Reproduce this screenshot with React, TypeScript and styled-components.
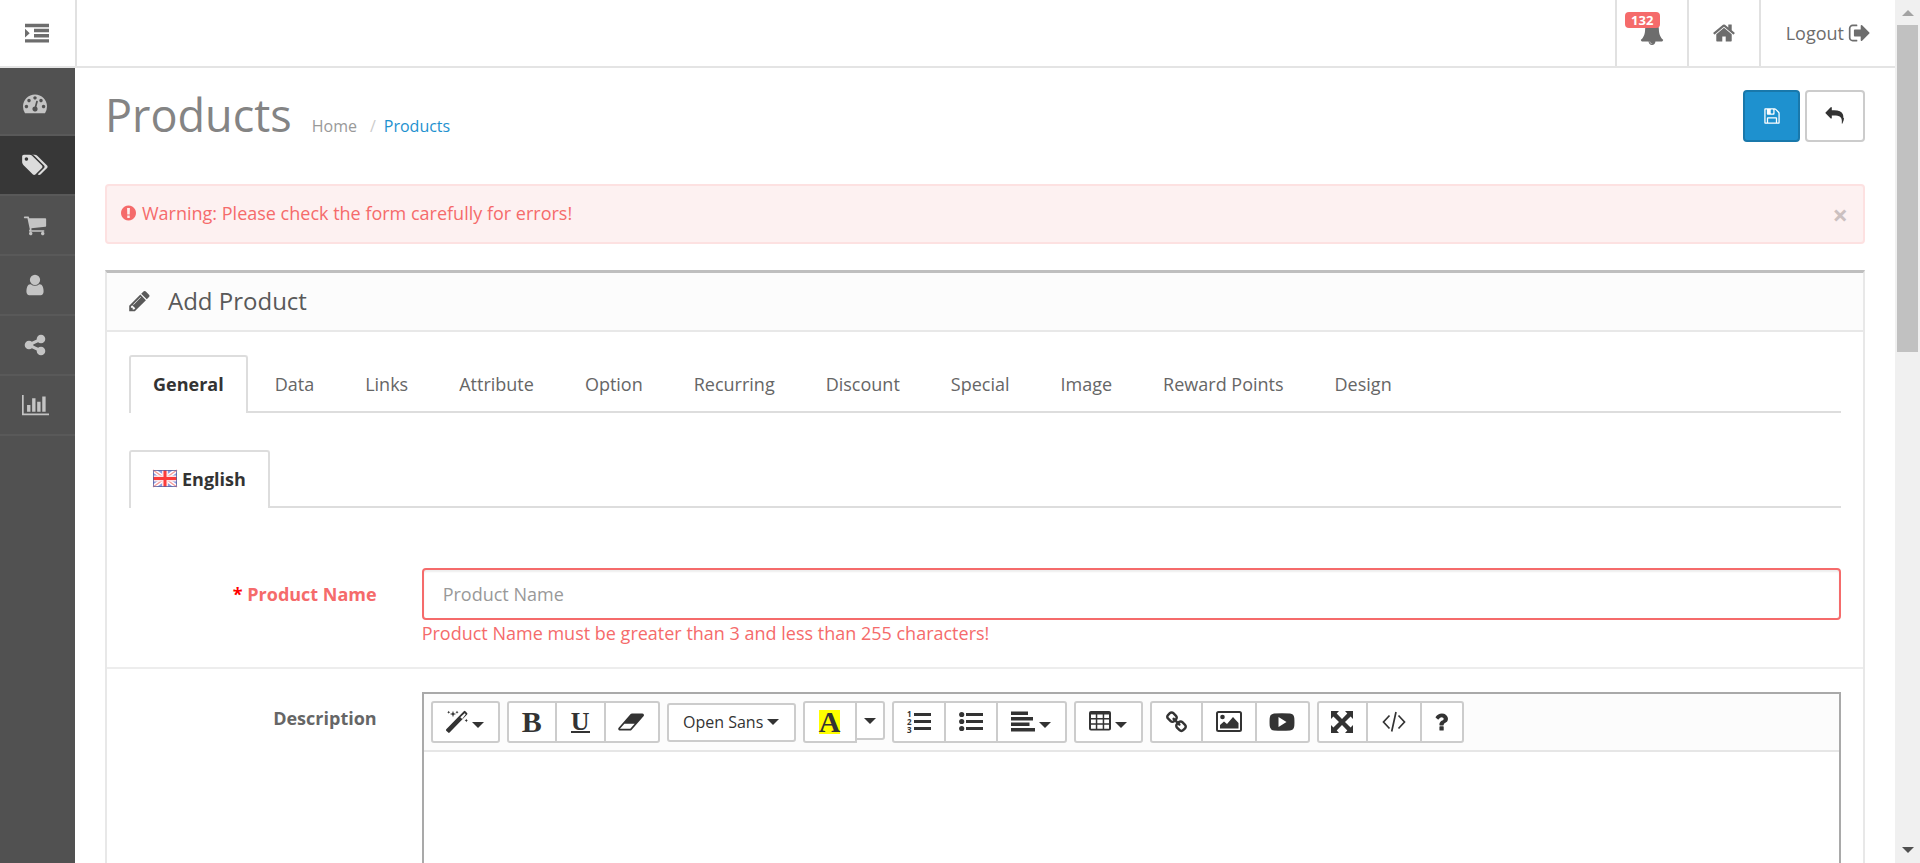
import React from 'react';
import styled, { createGlobalStyle, css } from 'styled-components';

const GlobalStyle = createGlobalStyle`
  *, *::before, *::after { box-sizing: border-box; }
  body {
    margin: 0;
    background: #fff;
    color: #666;
    font: 18px/26px "Open Sans", "Liberation Sans", sans-serif;
  }
  button, input, textarea { font: inherit; }
  a { text-decoration: none; }
  ul { list-style: none; margin: 0; padding: 0; }
  svg { display: block; flex: none; overflow: visible; }
`;

/* ---------- icons ---------- */

const PATHS = {
  indent: 'M0 128h1792v256H0zM672 512h1120v256H672zM672 896h1120v256H672zM0 1280h1792v256H0zM0 512l352 320L0 1152z',
  dashboard:
    'M384 1152q0-53-37.500-90.500t-90.500-37.500-90.500 37.500-37.500 90.500 37.500 90.500 90.500 37.500 90.500-37.500 37.500-90.500zm192-448q0-53-37.500-90.500t-90.500-37.500-90.500 37.500-37.500 90.500 37.500 90.500 90.500 37.500 90.500-37.500 37.500-90.500zm428 481l101-382q6-26-7.500-48.500t-38.500-29.500-48 6.500-30 39.500l-101 382q-60 5-107 43.500t-63 98.500q-20 77 20 146t117 89 146-20 89-117q16-60-6-117t-72-91zm660-33q0-53-37.500-90.500t-90.500-37.500-90.500 37.500-37.500 90.500 37.500 90.500 90.500 37.500 90.500-37.500 37.500-90.500zm-640-640q0-53-37.500-90.500t-90.500-37.500-90.500 37.500-37.500 90.500 37.500 90.500 90.500 37.500 90.500-37.500 37.500-90.500zm448 192q0-53-37.500-90.500t-90.500-37.500-90.500 37.500-37.500 90.500 37.500 90.500 90.500 37.500 90.500-37.500 37.500-90.500zm320 448q0 261-141 483-19 29-54 29h-1402q-35 0-54-29-141-221-141-483 0-182 71-348t191-286 286-191 348-71 348 71 286 191 191 286 71 348z',
  tags:
    'M576 448q0-53-37.500-90.500t-90.500-37.500-90.500 37.500-37.500 90.500 37.500 90.500 90.500 37.500 90.500-37.500 37.500-90.500zm1067 576q0 53-37 90l-491 492q-39 37-91 37-53 0-90-37l-715-716q-38-37-64.500-101t-26.500-117v-416q0-52 38-90t90-38h416q53 0 117 26.500t102 64.500l715 714q37 39 37 91zm384 0q0 53-37 90l-491 492q-39 37-91 37-36 0-59-14t-53-45l470-470q37-37 37-90 0-52-37-91l-715-714q-38-38-102-64.500t-117-26.500h224q53 0 117 26.500t102 64.500l715 714q37 39 37 91z',
  cart:
    'M704 1536q0 52-38 90t-90 38-90-38-38-90 38-90 90-38 90 38 38 90zm896 0q0 52-38 90t-90 38-90-38-38-90 38-90 90-38 90 38 38 90zm128-1088v512q0 24-16.500 42.500t-40.500 21.500l-1044 122q13 60 13 70 0 16-24 64h920q26 0 45 19t19 45-19 45-45 19h-1024q-26 0-45-19t-19-45q0-11 8-31.500t16-36 21.500-40 15.500-29.500l-177-823h-204q-26 0-45-19t-19-45 19-45 45-19h256q16 0 28.500 6.500t19.500 15.500 13 24.500 8 26 5.500 29.500 4.500 26h1201q26 0 45 19t19 45z',
  user:
    'M1536 1399q0 109-62.500 187t-150.500 78h-854q-88 0-150.500-78t-62.500-187q0-85 8.500-160.500t31.500-152 58.500-131 94-89 134.500-34.500q131 128 313 128t313-128q76 0 134.500 34.500t94 89 58.500 131 31.500 152 8.500 160.500zm-256-887q0 159-112.500 271.500t-271.500 112.500-271.500-112.500-112.500-271.500 112.500-271.500 271.500-112.500 271.500 112.500 112.500 271.500z',
  share:
    'M1344 1024q133 0 226.500 93.500t93.500 226.500-93.500 226.500-226.500 93.500-226.500-93.500-93.500-226.500q0-12 2-34l-360-180q-92 86-218 86-133 0-226.500-93.500t-93.500-226.500 93.500-226.500 226.500-93.500q126 0 218 86l360-180q-2-22-2-34 0-133 93.500-226.500t226.500-93.500 226.500 93.500 93.500 226.500-93.500 226.500-226.500 93.500q-126 0-218-86l-360 180q2 22 2 34t-2 34l360 180q92-86 218-86z',
  chart:
    'M640 896v512h-256v-512h256zm384-512v1024h-256v-1024h256zm1024 1152v128h-2048v-1536h128v1408h1920zm-640-896v768h-256v-768h256zm384-384v1152h-256v-1152h256z',
  bell:
    'M912 1696q0-16-16-16-59 0-101.500-42.500t-42.500-101.500q0-16-16-16t-16 16q0 73 51.500 124.500t124.500 51.500q16 0 16-16zm816-288q0 52-38 90t-90 38h-448q0 106-75 181t-181 75-181-75-75-181h-448q-52 0-90-38t-38-90q50-42 91-88t85-119.500 74.500-158.500 50-206 19.500-260q0-152 117-282.500t307-158.500q-8-19-8-39 0-40 28-68t68-28 68 28 28 68q0 20-8 39 190 28 307 158.500t117 282.500q0 139 19.500 260t50 206 74.500 158.500 85 119.500 91 88z',
  home:
    'M1472 992v480q0 26-19 45t-45 19h-384v-384h-256v384h-384q-26 0-45-19t-19-45v-480q0-1 .5-3t.5-3l575-474 575 474q1 2 1 6zm223-69l-62 74q-8 9-21 11h-3q-13 0-21-7l-692-577-692 577q-12 8-24 7-13-2-21-11l-62-74q-8-10-7-23.500t11-21.500l719-599q32-26 76-26t76 26l244 204v-195q0-14 9-23t23-9h192q14 0 23 9t9 23v408l219 182q10 8 11 21.500t-7 23.500z',
  signOut:
    'M704 1440q0 4 1 20t.5 26.500-3 23.500-10 19.500-20.500 6.500h-320q-119 0-203.500-84.500t-84.500-203.500v-704q0-119 84.500-203.500t203.500-84.500h320q13 0 22.500 9.500t9.500 22.500q0 4 1 20t.5 26.500-3 23.500-10 19.500-20.500 6.500h-320q-66 0-113 47t-47 113v704q0 66 47 113t113 47h312l11.500 1 11.500 3 8 5.500 7 9 2 13.500zm928-544q0 26-19 45l-544 544q-19 19-45 19t-45-19-19-45v-288h-448q-26 0-45-19t-19-45v-384q0-26 19-45t45-19h448v-288q0-26 19-45t45-19 45 19l544 544q19 19 19 45z',
  save:
    'M512 1536h768v-384h-768v384zm896 0h128v-896q0-14-10-38.500t-20-34.500l-281-281q-10-10-34-20t-39-10v416q0 40-28 68t-68 28h-576q-40 0-68-28t-28-68v-416h-128v1280h128v-416q0-40 28-68t68-28h832q40 0 68 28t28 68v416zm-384-928v-320q0-13-9.500-22.500t-22.500-9.500h-192q-13 0-22.500 9.500t-9.500 22.500v320q0 13 9.500 22.500t22.500 9.500h192q13 0 22.500-9.500t9.500-22.500zm640 32v928q0 40-28 68t-68 28h-1344q-40 0-68-28t-28-68v-1344q0-40 28-68t68-28h928q40 0 88 20t76 48l280 280q28 28 48 76t20 88z',
  reply:
    'M1792 1120q0 166-127 451-3 7-10.500 24t-13.500 30-13 22q-12 17-28 17-15 0-23.500-10t-8.500-25q0-9 2.500-26.500t2.500-23.500q5-68 5-123 0-112-19.500-200.500t-54-153.500-89-112-117.500-77.500-147-47.500-167.500-22-182-6h-224v256q0 26-19 45t-45 19-45-19l-512-512q-19-19-19-45t19-45l512-512q19-19 45-19t45 19 19 45v256h224q713 0 875 403 53 134 53 333z',
  warning:
    'M896 128q209 0 385.500 103t279.500 279.500 103 385.500-103 385.500-279.500 279.500-385.500 103-385.500-103-279.500-279.500-103-385.500 103-385.500 279.500-279.500 385.500-103zm128 1247v-190q0-14-9-23.500t-22-9.500h-192q-13 0-23 10t-10 23v190q0 13 10 23t23 10h192q13 0 22-9.500t9-23.500zm-2-344l18-621q0-12-10-18-10-8-24-8h-220q-14 0-24 8-10 6-10 18l17 621q0 10 10 17.500t24 7.500h185q14 0 23.500-7.500t10.500-17.500z',
  pencil:
    'M491 1536l91-91-235-235-91 91v107h128v128h107zm523-928q0-22-22-22-10 0-17 7l-542 542q-7 7-7 17 0 22 22 22 10 0 17-7l542-542q7-7 7-17zm-54-192l416 416-832 832h-416v-416zm683 96q0 53-37 90l-166 166-416-416 166-165q36-38 90-38 53 0 91 38l235 234q37 39 37 91z',
  eraser:
    'M832 1408l336-384h-768l-336 384h768zm1013-1077q15 34 9.500 71.500t-30.500 65.500l-896 1024q-38 44-96 44h-768q-38 0-69.500-20.500t-47.500-54.500q-15-34-9.500-71.500t30.500-65.500l896-1024q38-44 96-44h768q38 0 69.500 20.500t47.500 54.500z',
  link:
    'M1520 1216q0-40-28-68l-208-208q-28-28-68-28-42 0-72 32 3 3 19 18.500t21.500 21.500 15 19 13 25.500 3.500 27.500q0 40-28 68t-68 28q-15 0-27.500-3.500t-25.500-13-19-15-21.500-21.500-18.500-19q-33 31-33 73 0 40 28 68l206 207q27 27 68 27 40 0 68-26l147-146q28-28 28-67zm-703-705q0-40-28-68l-206-207q-28-28-68-28-39 0-68 27l-147 146q-28 28-28 67 0 40 28 68l208 208q27 27 68 27 42 0 72-31-3-3-19-18.500t-21.500-21.500-15-19-13-25.500-3.500-27.500q0-40 28-68t68-28q15 0 27.500 3.500t25.500 13 19 15 21.500 21.500 18.500 19q33-31 33-73zm895 705q0 120-85 203l-147 146q-83 83-203 83-121 0-204-85l-206-207q-83-83-83-203 0-123 88-209l-88-88q-86 88-208 88-120 0-204-84l-208-208q-84-84-84-204t85-203l147-146q83-83 203-83 121 0 204 85l206 207q83 83 83 203 0 123-88 209l88 88q86-88 208-88 120 0 204 84l208 208q84 84 84 204z',
  question:
    'M1024 1256v240q0 16-12 28t-28 12h-240q-16 0-28-12t-12-28v-240q0-16 12-28t28-12h240q16 0 28 12t12 28zm316-600q0 54-15.500 101t-35 76.500-55 59.500-57.500 43.500-61 35.500q-41 23-68.500 65t-27.500 67q0 17-12 32.500t-28 15.500h-240q-15 0-25.500-18.500t-10.500-37.500v-45q0-83 65-156.500t143-108.500q59-27 84-56t25-76q0-42-46.500-74t-107.500-32q-65 0-108 29-35 25-107 115-13 16-31 16-12 0-25-8l-164-125q-13-10-15.500-25t5.500-28q160-266 464-266 80 0 161 31t146 83 106 127.500 41 158.500z',
};

const BOXES: Partial<Record<keyof typeof PATHS, [number, number]>> = {
  tags: [128, 1920],
  chart: [0, 2048],
  eraser: [0, 1856],
  signOut: [0, 1664],
  warning: [128, 1536],
  pencil: [128, 1536],
};

const Icon = ({ name, size = 24 }: { name: keyof typeof PATHS; size?: number }) => {
  const [x, w] = BOXES[name] ?? [0, 1792];
  return (
    <svg viewBox={`${x} 0 ${w} 1792`} width={Math.round((w / 1792) * size)} height={size} fill="currentColor" aria-hidden>
      <path d={PATHS[name]} />
    </svg>
  );
};

const Glyph = ({ w = 24, children }: { w?: number; children: React.ReactNode }) => (
  <svg viewBox={`0 0 ${w} 24`} width={w} height={24} fill="currentColor" aria-hidden>
    {children}
  </svg>
);

const MagicIcon = () => (
  <Glyph w={22}>
    <path d="M0 19.500L17.800 1.200q.8-.7 1.600 0l1.700 1.700q.7.800 0 1.600L3.600 22.600q-.7.600-1.400 0l-2-1.900q-.5-.6 0-1.200zM14.300 7.200l1.900 1.900 3.500-4.900-1-1z" fillRule="evenodd" />
    <path d="M7 .8l.8 2.400 2.400.8-2.400.8L7 7.200l-.8-2.400L3.800 4l2.400-.8zM2.700.7l.5 1 1 .5-1 .5-.5 1-.5-1-1-.5 1-.5zM11 .7l.5 1 1 .5-1 .5-.5 1-.5-1-1-.5 1-.5zM20.300 8.700l.6 1.200 1.100.6-1.100.6-.6 1.200-.6-1.200-1.100-.6 1.100-.6z" />
  </Glyph>
);

const NumberedIcon = () => (
  <Glyph>
    <path d="M7 3h17v3H7zM7 10h17v3H7zM7 17h17v3H7z" />
    <g fontFamily="Open Sans, sans-serif" fontWeight="700" fontSize="8">
      <text x="0" y="7">1</text>
      <text x="0" y="15">2</text>
      <text x="0" y="23">3</text>
    </g>
  </Glyph>
);

const BulletedIcon = () => (
  <Glyph>
    <path d="M7 3h17v3H7zM7 10h17v3H7zM7 17h17v3H7z" />
    <circle cx="2.700" cy="4.500" r="2.600" />
    <circle cx="2.700" cy="11.500" r="2.600" />
    <circle cx="2.700" cy="18.500" r="2.600" />
  </Glyph>
);

const ParagraphIcon = () => (
  <Glyph>
    <path d="M0 1.500h17v3.500H0zM0 7h22v3.500H0zM0 12.500h18.500V16H0zM0 18h24v3.500H0z" />
  </Glyph>
);

const TableIcon = () => (
  <Glyph w={22}>
    <path
      fillRule="evenodd"
      d="M2 1h18q2 0 2 2v15.500q0 2-2 2H2q-2 0-2-2V3q0-2 2-2zM2 4.500V8h4.800V4.500zM8.300 4.500V8h5.400V4.500zM15.200 4.500V8H20V4.500zM2 9.500v3.800h4.800V9.500zM8.300 9.500v3.800h5.400V9.500zM15.200 9.500v3.800H20V9.500zM2 14.800v3.900h4.800v-3.900zM8.300 14.800v3.900h5.400v-3.900zM15.200 14.800v3.900H20v-3.900z"
    />
  </Glyph>
);

const PictureIcon = () => (
  <Glyph w={26}>
    <rect x="1" y="2" width="24" height="19" rx="1.500" fill="none" stroke="currentColor" strokeWidth="2" />
    <circle cx="6.500" cy="7" r="2.300" />
    <path d="M4 18.500v-3.500l4-3.500 3 2.500 6-7 5.500 6v5.500z" />
  </Glyph>
);

const VideoIcon = () => (
  <Glyph w={26}>
    <path fillRule="evenodd" d="M5 3.500q8-.6 16 0 4 .4 4.300 4.500.3 4 0 8-.4 4.100-4.300 4.500-8 .6-16 0-4-.4-4.300-4.500-.3-4 0-8Q1 3.900 5 3.500zM9.500 7v10l8-5z" />
  </Glyph>
);

const FullscreenIcon = () => (
  <Glyph w={22}>
    <path d="M0 1h8L5.700 3.600 11 9l5.300-5.400L14 1h8v8l-2.400-2.400L14 12l5.600 5.400L22 15v8h-8l2.300-2.600L11 15l-5.300 5.400L8 23H0v-8l2.400 2.400L8 12 2.400 6.600 0 9z" />
  </Glyph>
);

const CodeIcon = () => (
  <Glyph>
    <path d="M7.500 5.500L1.500 12l6 6.500M16.500 5.500l6 6.500-6 6.500M14 2l-4.300 19.500" fill="none" stroke="currentColor" strokeWidth="1.700" />
  </Glyph>
);

const FlagIcon = () => (
  <svg viewBox="0 0 24 17" width={24} height={17} aria-hidden>
    <path fill="#8a9be0" d="M0 0h24v17H0z" />
    <path stroke="#fff" strokeWidth="4" d="M0 0l24 17M24 0L0 17" />
    <path stroke="#f59a9a" strokeWidth="1.500" d="M0 0l24 17M24 0L0 17" />
    <path fill="#fbe4e8" d="M9 0h6v17H9zM0 5.500h24v6H0z" />
    <path fill="#fb3b3b" d="M10.500 0h3v17h-3zM0 7h24v3H0z" />
    <path fill="none" stroke="#5a5f9e" strokeOpacity=".8" d="M.5.5h23v16H.5z" />
  </svg>
);

const Caret = styled.span`
  width: 0;
  height: 0;
  border: 6px solid transparent;
  border-top-color: currentColor;
  border-bottom-width: 0;
`;

/* ---------- frame ---------- */

const Window = styled.div`
  display: grid;
  grid-template-columns: minmax(0, 1fr) 25px;
  height: 100vh;
`;

const Page = styled.div`
  display: flex;
  flex-direction: column;
  overflow-y: auto;
  scrollbar-width: none;
`;

const ScrollTrack = styled.div`
  display: flex;
  flex-direction: column;
  align-items: center;
  padding: 10px 0;
  background: #f0f0f0;
`;

const ScrollThumb = styled.div`
  width: 21px;
  height: 327px;
  margin: 9px 0 auto;
  background: #c1c1c1;
`;

const ScrollArrow = styled.span<{ $up?: boolean }>`
  border: 6px solid transparent;
  ${(p) =>
    p.$up
      ? css`border-bottom-color: #a3a3a3; border-top-width: 0;`
      : css`border-top-color: #505050; border-bottom-width: 0;`}
`;

const TopBar = styled.header`
  display: flex;
  flex: none;
  justify-content: space-between;
  height: 68px;
  border-bottom: 2px solid #e4e4e4;
`;

const MenuToggle = styled.button`
  display: flex;
  align-items: center;
  width: 77px;
  padding: 2px 0 0 25px;
  border: 0;
  border-right: 2px solid #e1e1e1;
  background: #fff;
  color: #6d6d6d;
`;

const TopLinks = styled.ul`
  display: flex;
`;

const TopLink = styled.a<{ $wide?: boolean }>`
  position: relative;
  display: flex;
  align-items: center;
  gap: 4px;
  height: 66px;
  padding: 0 ${(p) => (p.$wide ? 25 : 23)}px;
  border-left: 2px solid #e1e1e1;
  color: #6d6d6d;
`;

const Badge = styled.span`
  position: absolute;
  top: 12px;
  left: 8px;
  width: 35px;
  border-radius: 4px;
  background: #f56b6b;
  color: #fff;
  font-size: 13px;
  font-weight: 700;
  line-height: 16px;
  text-align: center;
`;

const Body = styled.div`
  display: flex;
  flex: 1 0 auto;
`;

const Sidebar = styled.nav`
  flex: none;
  width: 75px;
  padding-top: 4px;
  background: #515151;

  li:first-child > a { height: 64px; }
`;

const SideLink = styled.a<{ $active?: boolean }>`
  display: flex;
  align-items: center;
  justify-content: center;
  height: 60px;
  padding-right: 5px;
  border-bottom: 2px solid #595959;
  background: ${(p) => (p.$active ? '#373737' : 'transparent')};
  color: ${(p) => (p.$active ? '#dcdcdc' : '#c4c4c4')};
`;

const Main = styled.main`
  flex: 1;
  min-width: 0;
  padding: 22px 30px 60px;
`;

/* ---------- page heading ---------- */

const PageHeader = styled.div`
  display: flex;
  justify-content: space-between;
  height: 94px;
`;

const TitleRow = styled.div`
  display: flex;
  align-items: baseline;
  gap: 20px;
`;

const Title = styled.h1`
  margin: 0;
  color: #848484;
  font-size: 45px;
  font-weight: 400;
  line-height: 50px;
`;

const Breadcrumb = styled.ul`
  display: flex;
  font-size: 16px;
  line-height: 24px;

  li + li::before {
    content: "/";
    padding: 0 8px 0 13px;
    color: #ccc;
  }
`;

const Crumb = styled.a<{ $current?: boolean }>`
  color: ${(p) => (p.$current ? '#1e91cf' : '#999')};
`;

const Actions = styled.div`
  display: flex;
  gap: 5px;
`;

const ActionButton = styled.button<{ $primary?: boolean }>`
  display: flex;
  align-items: center;
  justify-content: center;
  width: ${(p) => (p.$primary ? 57 : 60)}px;
  height: 52px;
  border: 2px solid ${(p) => (p.$primary ? '#1978ab' : '#ccc')};
  border-radius: 4px;
  background: ${(p) => (p.$primary ? '#1e91cf' : '#fff')};
  color: ${(p) => (p.$primary ? '#fff' : '#333')};
`;

const Alert = styled.div`
  display: flex;
  align-items: center;
  gap: 6px;
  height: 60px;
  margin-bottom: 26px;
  padding: 0 15px 0 14px;
  border: 2px solid #fde1e1;
  border-radius: 4px;
  background: #fdf1f1;
  color: #f56b6b;
`;

const AlertText = styled.span`
  padding-bottom: 2px;
`;

const AlertIcon = styled.span`
  padding-bottom: 2px;
`;

const CloseButton = styled.button`
  margin-left: auto;
  padding: 2px 0 0;
  border: 0;
  background: none;
  color: #cbc0c0;
  font-size: 27px;
  font-weight: 700;
`;

/* ---------- panel ---------- */

const Panel = styled.section`
  border: 2px solid #e8e8e8;
  border-top: 3px solid #bfbfbf;
`;

const PanelHeading = styled.div`
  display: flex;
  align-items: center;
  gap: 18px;
  height: 59px;
  padding: 0 22px 1px;
  border-bottom: 2px solid #e8e8e8;
  background: #fcfcfc;
  color: #595959;
`;

const PanelTitle = styled.h3`
  margin: 0;
  padding-bottom: 1px;
  font-size: 24px;
  font-weight: 400;
  line-height: 26px;
`;

const PanelBody = styled.div`
  padding: 23px 22px;
`;

const Tabs = styled.ul`
  display: flex;
  gap: 3px;
  height: 58px;
  margin-bottom: 37px;
  border-bottom: 2px solid #ddd;
`;

const Tab = styled.a<{ $active?: boolean }>`
  display: flex;
  align-items: center;
  gap: 5px;
  height: 58px;
  padding: 0 22px 3px;
  border: 2px solid transparent;
  border-bottom: 0;
  border-radius: 3px 3px 0 0;
  color: #666;
  white-space: nowrap;
  ${(p) =>
    p.$active &&
    css`
      border-color: #ddd;
      background: #fff;
      color: #333;
      font-weight: 700;
    `}
`;

const FormGroup = styled.div`
  display: grid;
  grid-template-columns: minmax(0, 1fr) minmax(0, 5fr);
  margin: 0 -22px;
  padding: 23px 0 21px;

  & + & {
    border-top: 2px solid #ededed;
  }
`;

const Label = styled.label<{ $error?: boolean }>`
  padding: 13px 23px 0;
  color: ${(p) => (p.$error ? '#f56b6b' : '#666')};
  font-weight: 700;
  text-align: right;
`;

const Required = styled.span`
  color: #f00;
`;

const Field = styled.div`
  padding: 0 22px;
`;

const TextInput = styled.input`
  display: block;
  width: 100%;
  height: 52px;
  padding: 0 19px;
  border: 2px solid #f56b6b;
  border-radius: 4px;
  box-shadow: inset 0 2px 2px rgba(0, 0, 0, 0.07);
  color: #555;

  &::placeholder { color: #999; }
`;

const ErrorText = styled.div`
  color: #f56b6b;
`;

/* ---------- editor ---------- */

const Editor = styled.div`
  border: 2px solid #a9a9a9;
`;

const Toolbar = styled.div`
  display: flex;
  flex-wrap: wrap;
  align-items: center;
  gap: 7px;
  padding: 7px;
  border-bottom: 2px solid #e6e6e6;
  background: #fcfcfc;
`;

const ToolGroup = styled.div`
  display: flex;
`;

const ToolButton = styled.button<{ $w: number; $h?: number }>`
  display: flex;
  align-items: center;
  justify-content: center;
  gap: 4px;
  width: ${(p) => p.$w}px;
  height: ${(p) => p.$h ?? 42}px;
  padding: 0;
  border: 2px solid #ccc;
  background: #fff;
  color: #333;
  font-size: 16px;

  & + & { margin-left: -2px; }
  &:first-child { border-top-left-radius: 3px; border-bottom-left-radius: 3px; }
  &:last-child { border-top-right-radius: 3px; border-bottom-right-radius: 3px; }

  svg + ${Caret} { margin-top: 5px; }
`;

const Letter = styled.span<{ $kind: 'bold' | 'underline' | 'color' }>`
  font-family: "Liberation Serif", serif;
  font-weight: 700;
  font-size: 30px;
  line-height: 24px;
  ${(p) => p.$kind === 'underline' && css`border-bottom: 2px solid #333; font-size: 26px; line-height: 19px;`}
  ${(p) => p.$kind === 'color' && css`background: #ff0;`}
`;

const FontName = styled.span`
  padding-bottom: 1px;
`;

const EditArea = styled.textarea`
  display: block;
  width: 100%;
  height: 450px;
  padding: 15px;
  border: 0;
  resize: none;
  outline: none;
`;

const NAV: { name: keyof typeof PATHS; label: string; active?: boolean }[] = [
  { name: 'dashboard', label: 'Dashboard' },
  { name: 'tags', label: 'Catalog', active: true },
  { name: 'cart', label: 'Sales' },
  { name: 'user', label: 'Customers' },
  { name: 'share', label: 'Marketing' },
  { name: 'chart', label: 'Reports' },
];

const TABS = ['General', 'Data', 'Links', 'Attribute', 'Option', 'Recurring', 'Discount', 'Special', 'Image', 'Reward Points', 'Design'];

const EditorToolbar = () => (
  <Toolbar>
    <ToolGroup>
      <ToolButton type="button" $w={69} aria-label="Style"><MagicIcon /><Caret /></ToolButton>
    </ToolGroup>
    <ToolGroup>
      <ToolButton type="button" $w={50}><Letter $kind="bold">B</Letter></ToolButton>
      <ToolButton type="button" $w={51}><Letter $kind="underline">U</Letter></ToolButton>
      <ToolButton type="button" $w={56} aria-label="Remove font style"><Icon name="eraser" /></ToolButton>
    </ToolGroup>
    <ToolGroup>
      <ToolButton type="button" $w={129} $h={39}><FontName>Open Sans</FontName><Caret /></ToolButton>
    </ToolGroup>
    <ToolGroup>
      <ToolButton type="button" $w={54}><Letter $kind="color">A</Letter></ToolButton>
      <ToolButton type="button" $w={30} $h={39} aria-label="More colors"><Caret /></ToolButton>
    </ToolGroup>
    <ToolGroup>
      <ToolButton type="button" $w={54} aria-label="Ordered list"><NumberedIcon /></ToolButton>
      <ToolButton type="button" $w={54} aria-label="Unordered list"><BulletedIcon /></ToolButton>
      <ToolButton type="button" $w={71} aria-label="Paragraph"><ParagraphIcon /><Caret /></ToolButton>
    </ToolGroup>
    <ToolGroup>
      <ToolButton type="button" $w={69} aria-label="Table"><TableIcon /><Caret /></ToolButton>
    </ToolGroup>
    <ToolGroup>
      <ToolButton type="button" $w={53} aria-label="Link"><Icon name="link" size={23} /></ToolButton>
      <ToolButton type="button" $w={56} aria-label="Picture"><PictureIcon /></ToolButton>
      <ToolButton type="button" $w={55} aria-label="Video"><VideoIcon /></ToolButton>
    </ToolGroup>
    <ToolGroup>
      <ToolButton type="button" $w={51} aria-label="Full screen"><FullscreenIcon /></ToolButton>
      <ToolButton type="button" $w={56} aria-label="Code view"><CodeIcon /></ToolButton>
      <ToolButton type="button" $w={44} aria-label="Help"><Icon name="question" /></ToolButton>
    </ToolGroup>
  </Toolbar>
);

export default function App() {
  return (
    <>
      <GlobalStyle />
      <Window>
        <Page>
          <TopBar>
            <MenuToggle type="button" aria-label="Toggle menu"><Icon name="indent" /></MenuToggle>
            <TopLinks>
              <li><TopLink href="#notifications" aria-label="Notifications"><Icon name="bell" /><Badge>132</Badge></TopLink></li>
              <li><TopLink href="#store" aria-label="Store front"><Icon name="home" /></TopLink></li>
              <li><TopLink href="#logout" $wide>Logout<Icon name="signOut" /></TopLink></li>
            </TopLinks>
          </TopBar>
          <Body>
            <Sidebar>
              <ul>
                {NAV.map((item) => (
                  <li key={item.name}>
                    <SideLink href={`#${item.name}`} $active={item.active} aria-label={item.label}>
                      <Icon name={item.name} />
                    </SideLink>
                  </li>
                ))}
              </ul>
            </Sidebar>
            <Main>
              <PageHeader>
                <TitleRow>
                  <Title>Products</Title>
                  <Breadcrumb>
                    <li><Crumb href="#home">Home</Crumb></li>
                    <li><Crumb href="#products" $current>Products</Crumb></li>
                  </Breadcrumb>
                </TitleRow>
                <Actions>
                  <ActionButton type="submit" form="form-product" $primary aria-label="Save"><Icon name="save" size={18} /></ActionButton>
                  <ActionButton type="button" aria-label="Cancel"><Icon name="reply" size={18} /></ActionButton>
                </Actions>
              </PageHeader>
              <Alert role="alert">
                <AlertIcon><Icon name="warning" size={18} /></AlertIcon>
                <AlertText>Warning: Please check the form carefully for errors!</AlertText>
                <CloseButton type="button" aria-label="Close">×</CloseButton>
              </Alert>
              <Panel>
                <PanelHeading>
                  <Icon name="pencil" />
                  <PanelTitle>Add Product</PanelTitle>
                </PanelHeading>
                <PanelBody>
                  <form id="form-product" onSubmit={(e) => e.preventDefault()}>
                    <Tabs>
                      {TABS.map((tab, i) => (
                        <li key={tab}><Tab href={`#tab-${i}`} $active={i === 0}>{tab}</Tab></li>
                      ))}
                    </Tabs>
                    <Tabs>
                      <li><Tab href="#language" $active><FlagIcon />English</Tab></li>
                    </Tabs>
                    <FormGroup>
                      <Label htmlFor="input-name" $error><Required>*</Required> Product Name</Label>
                      <Field>
                        <TextInput id="input-name" type="text" placeholder="Product Name" />
                        <ErrorText>Product Name must be greater than 3 and less than 255 characters!</ErrorText>
                      </Field>
                    </FormGroup>
                    <FormGroup>
                      <Label htmlFor="input-description">Description</Label>
                      <Field>
                        <Editor>
                          <EditorToolbar />
                          <EditArea id="input-description" />
                        </Editor>
                      </Field>
                    </FormGroup>
                  </form>
                </PanelBody>
              </Panel>
            </Main>
          </Body>
        </Page>
        <ScrollTrack aria-hidden>
          <ScrollArrow $up />
          <ScrollThumb />
          <ScrollArrow />
        </ScrollTrack>
      </Window>
    </>
  );
}
